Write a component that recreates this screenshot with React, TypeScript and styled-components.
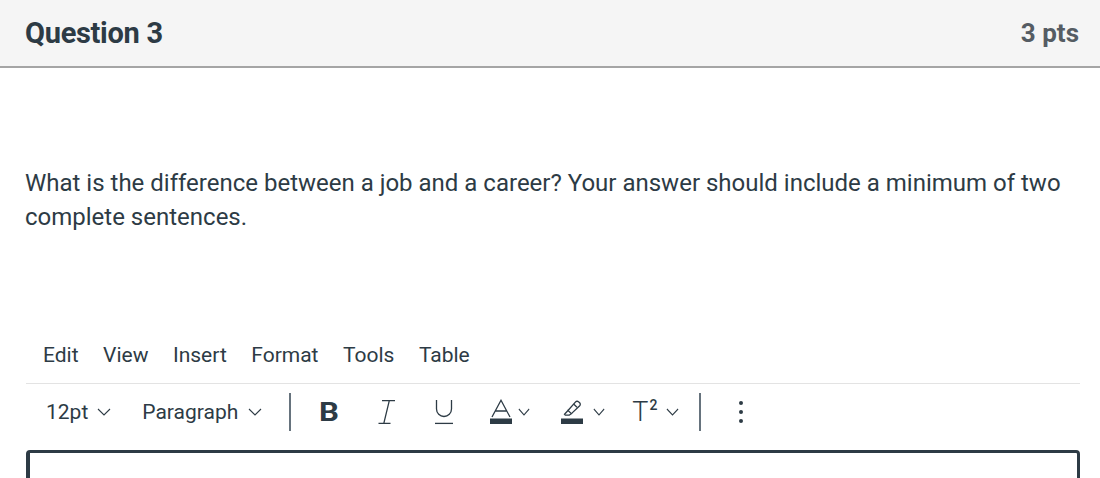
import React from 'react';
import styled, { createGlobalStyle } from 'styled-components';

const GlobalStyle = createGlobalStyle`
  html, body {
    margin: 0;
    padding: 0;
    background: #fff;
    font-family: Roboto, "Liberation Sans", Arial, sans-serif;
    color: #2d3b45;
  }
`

const Chevron = ({ ml = 0, w = 13 }: { ml?: number; w?: number }) => (
  <ChevronSvg $ml={ml} width={w} height="8" viewBox="0 0 14 8" preserveAspectRatio="none" fill="none" stroke="#2d3b45" strokeWidth="1.1">
    <path d="M1 1l6 6 6-6" />
  </ChevronSvg>
)

const App = () => {
  const menus = ['Edit', 'View', 'Insert', 'Format', 'Tools', 'Table']

  return (
    <>
      <GlobalStyle />
      <Page>
        <Header>
          <Title>Question 3</Title>
          <Points>3 pts</Points>
        </Header>
        <Body>
          <QuestionText>
            What is the difference between a job and a career? Your answer should include a minimum of two
            complete sentences.
          </QuestionText>
          <Editor>
            <MenuBar>
              {menus.map((m) => (
                <MenuItem key={m}>{m}</MenuItem>
              ))}
            </MenuBar>
            <Toolbar>
              <Label>12pt</Label>
              <Chevron ml={9} w={14} />
              <Label $ml={31}>Paragraph</Label>
              <Chevron ml={10} w={14} />
              <Divider $ml={27} />
              <BoldButton $ml={28}>B</BoldButton>
              <Icon $ml={39} width="18" height="26" viewBox="0 0 18 26" fill="none" stroke="#2d3b45" strokeWidth="1.3">
                <path d="M4 1.6h13M0.5 24.4h12M11.3 1.6L5.8 24.4" />
              </Icon>
              <Icon $ml={39} width="18" height="26" viewBox="0 0 18 26" fill="none" stroke="#2d3b45" strokeWidth="1.3">
                <path d="M1.5 1v9a7.5 7.5 0 0015 0V1" />
                <path d="M0 24.4h18" />
              </Icon>
              <Icon $ml={37} width="22" height="26" viewBox="0 0 22 26" fill="none" stroke="#2d3b45" strokeWidth="1.3">
                <path d="M2 18L11 1.3 20 18M5.3 12h11.4" />
                <rect x="0" y="19.5" width="22" height="5.5" fill="#2d3b45" stroke="none" />
              </Icon>
              <Chevron ml={6} w={12} />
              <Icon $ml={31} width="22" height="26" viewBox="0 0 22 26" fill="none" stroke="#2d3b45" strokeWidth="1.3">
                <path d="M7 11.5l7.6-8.6a2 2 0 012.9-.1l1.1 1a2 2 0 01.1 2.9L10.4 14.6" />
                <path d="M7 11.5l3.4 3.1-2.2 1.6H4.3l-.8-.9z" />
                <path d="M12.6 5.1l3.4 3.1" />
                <rect x="0" y="19.5" width="22" height="5.5" fill="#2d3b45" stroke="none" />
              </Icon>
              <Chevron ml={10} w={12} />
              <Sup $ml={27}>
                T<small>2</small>
              </Sup>
              <Chevron ml={9} w={13} />
              <Divider $ml={20} />
              <MoreButton $ml={38}>
                <Dot />
                <Dot />
                <Dot />
              </MoreButton>
            </Toolbar>
            <TextArea />
          </Editor>
        </Body>
      </Page>
    </>
  )
}

const Page = styled.div`
  width: 1100px;
  height: 478px;
  overflow: hidden;
`
const Header = styled.div`
  display: flex;
  align-items: center;
  justify-content: space-between;
  height: 66px;
  padding: 0 21px 0 25px;
  background: #f5f5f5;
  border-bottom: 2px solid #a5a5a5;
`
const Title = styled.h2`
  margin: 0;
  font-size: 29px;
  font-weight: 700;
  color: #2d3b45;
  letter-spacing: -0.3px;
`
const Points = styled.div`
  font-size: 26px;
  font-weight: 700;
  color: #555c63;
`
const Body = styled.div`
  padding: 98px 20px 0 26px;
`
const QuestionText = styled.p`
  margin: 0 0 105px -1px;
  font-size: 24px;
  line-height: 34px;
  color: #2d3b45;
`
const Editor = styled.div`
  display: flex;
  flex-direction: column;
`
const MenuBar = styled.div`
  display: flex;
  align-items: center;
  gap: 24.5px;
  height: 32px;
  padding: 0 0 12px 17px;
  border-bottom: 1px solid #e3e3e3;
`
const MenuItem = styled.span`
  font-size: 21px;
  color: #2d3b45;
`
const Toolbar = styled.div`
  display: flex;
  align-items: center;
  height: 56px;
  padding-left: 20px;
`
const Label = styled.span<{ $ml?: number }>`
  margin-left: ${({ $ml }) => $ml || 0}px;
  font-size: 21px;
  color: #2d3b45;
`
const ChevronSvg = styled.svg<{ $ml: number }>`
  margin-left: ${({ $ml }) => $ml}px;
  flex-shrink: 0;
`
const Divider = styled.div<{ $ml: number }>`
  margin-left: ${({ $ml }) => $ml}px;
  width: 2px;
  height: 38px;
  background: #66737d;
`
const BoldButton = styled.span<{ $ml: number }>`
  display: inline-block;
  width: 20px;
  margin-left: ${({ $ml }) => $ml}px;
  font-size: 26px;
  font-weight: 700;
  color: #2d3b45;
  transform: scaleX(1.2);
  transform-origin: left center;
`
const Icon = styled.svg<{ $ml: number }>`
  display: block;
  margin-left: ${({ $ml }) => $ml}px;
  flex-shrink: 0;
`
const Sup = styled.span<{ $ml: number }>`
  margin-left: ${({ $ml }) => $ml}px;
  font-size: 27px;
  font-weight: 300;
  color: #2d3b45;
  small {
    margin-left: 1px;
    font-size: 14px;
    font-weight: 500;
    vertical-align: 11px;
  }
`
const MoreButton = styled.span<{ $ml: number }>`
  display: flex;
  flex-direction: column;
  gap: 5px;
  margin-left: ${({ $ml }) => $ml}px;
`
const Dot = styled.span`
  width: 4px;
  height: 4px;
  border-radius: 50%;
  background: #2d3b45;
`
const TextArea = styled.div`
  height: 100px;
  margin-top: 10px;
  border: 3px solid #2d3b45;
  border-left-width: 4px;
  border-radius: 4px;
`

export default App
